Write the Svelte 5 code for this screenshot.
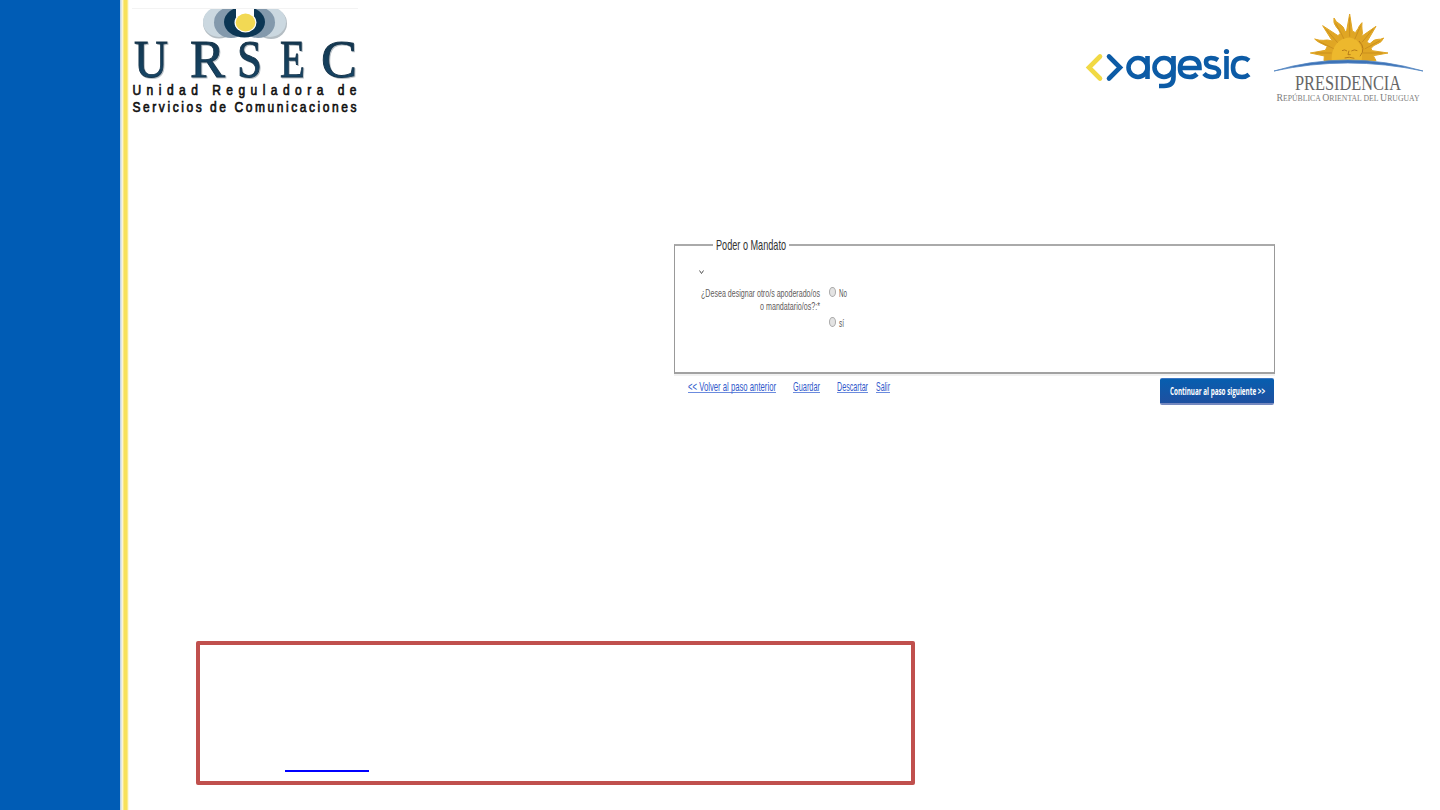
<script>
  const links = [
    { label: '<< Volver al paso anterior', width: 88, gap: 17 },
    { label: 'Guardar', width: 27, gap: 17 },
    { label: 'Descartar', width: 31, gap: 8 },
    { label: 'Salir', width: 14, gap: 0 }
  ];
  // condensed lettering: set small, then stretched vertically
  const k = 0.62;
</script>

{#snippet fit(text, width, height, baseline, size)}
  <svg class="fit" {width} {height}>
    <text x="0" y={baseline * k} font-size={size * k} transform="scale(1 {1 / k})" textLength={width} lengthAdjust="spacingAndGlyphs">{text}</text>
  </svg>
{/snippet}

<div class="page">
  <aside></aside>
  <div class="stripe"></div>
  <main>
    <header>
      <svg class="ursec" width="232" height="112" viewBox="129 4 232 112">
        <defs>
          <linearGradient id="navy" x1="0" y1="0" x2="0" y2="1">
            <stop offset="0" stop-color="#123349" />
            <stop offset="1" stop-color="#17496c" />
          </linearGradient>
          <clipPath id="crown"><rect x="200" y="9" width="90" height="32" /></clipPath>
        </defs>
        <path d="M132 8.5H358" stroke="#f3f3f3" />
        <g clip-path="url(#crown)">
          <ellipse cx="219" cy="23" rx="16" ry="15.5" fill="#b4bdc3" />
          <ellipse cx="271" cy="23.500" rx="16" ry="15.500" fill="#b4bdc3" />
          <ellipse cx="219" cy="22" rx="16" ry="15" fill="#cbd8e0" />
          <ellipse cx="270" cy="22" rx="16" ry="15" fill="#cbd8e0" />
          <ellipse cx="231" cy="22.500" rx="17" ry="15.500" fill="#8399ac" />
          <ellipse cx="258" cy="22.500" rx="17" ry="15.500" fill="#8399ac" />
          <ellipse cx="244.500" cy="22" rx="20.500" ry="15.500" fill="#0b3654" />
          <path d="M236 8h18v9h-18z" fill="#fff" />
          <ellipse cx="245.500" cy="22.500" rx="11" ry="10" fill="#fff" />
          <ellipse cx="245.500" cy="22.500" rx="9.800" ry="9" fill="#f2d954" />
        </g>
        <g class="initials" font-size="52" fill="url(#navy)">
          <text x="134" y="77" textLength="34" lengthAdjust="spacingAndGlyphs">U</text>
          <text x="190" y="77" textLength="35" lengthAdjust="spacingAndGlyphs">R</text>
          <text x="237" y="77" textLength="25" lengthAdjust="spacingAndGlyphs">S</text>
          <text x="280" y="77" textLength="25" lengthAdjust="spacingAndGlyphs">E</text>
          <text x="321" y="77" textLength="36" lengthAdjust="spacingAndGlyphs">C</text>
        </g>
        <g class="motto" font-size="15" transform="translate(132.500 0) scale(.8 1)">
          <text x="0" y="95" textLength="280">Unidad Reguladora de</text>
          <text x="0" y="112.500" textLength="280">Servicios de Comunicaciones</text>
        </g>
      </svg>

      <svg class="agesic" width="170" height="50" viewBox="1083 43 170 50" fill="none" stroke-width="4.600">
        <path d="M1100 56.500 1089 67.500 1100 78.500" stroke="#f1d944" stroke-linecap="round" />
        <path d="M1109 56.500 1120 67.500 1109 78.500" stroke="#0c5ba6" stroke-linecap="round" />
        <g stroke="#0c5ba6">
          <circle cx="1138" cy="67.500" r="9.500" />
          <path d="M1147.500 56V79" />
          <circle cx="1164" cy="67.500" r="9.500" />
          <path d="M1173.500 56V77Q1173.500 86 1164 86H1159" />
          <path d="M1180 68H1199.500Q1199.500 58 1190 58T1180 67.500 1190 77Q1194 77 1197 74" />
          <path d="M1218 60Q1215 58 1211 58Q1206 58 1206 62Q1206 66.500 1212 67.200Q1219 68 1219 72.500Q1219 77 1212.500 77Q1207 77 1204 73.500" />
          <path d="M1226.500 56V79" />
          <path d="M1249 60.500Q1246 58 1242 58Q1233 58 1233 67.500T1242 77Q1246 77 1249 74.500" />
        </g>
        <circle cx="1226.500" cy="51.500" r="2.600" fill="#0c5ba6" />
      </svg>

      <svg class="presidencia" width="156" height="100" viewBox="1270 8 156 100">
        <g transform="translate(1298 10) scale(.33333)">
          <path fill="#e0a624" stroke="#e0a624" stroke-width="3" stroke-linejoin="round" d="M78 152 79 138 37 129 82 121 88 109Q72 101 65 98Q57 94 50 87Q65 92 76 91Q88 88 103 93L74 47 120 77 127 70Q123 59 115 51Q105 40 108 24Q113 36 126 43Q138 49 141 65L146 62 155 12 163 63 172 68 180 56Q183 47 192 38Q191 49 192 57Q195 70 191 79L234 49 206 97 216 101Q229 87 240 88Q248 89 257 84Q250 98 239 101Q227 105 219 115L222 122 270 129 226 137 234 152Z" />
          <path d="M101 152C99 108 125 83 153 83S199 111 190 154Z" fill="#edb82d" />
          <path d="M155 22V80M84 58 119 98M226 56 192 97M113 40Q129 67 138 87M188 47 170 88M62 94 107 116M246 92 200 117M52 129H101M254 129H194" fill="none" stroke="#c68b1d" stroke-width="2.500" />
          <path d="M132 122Q140 117 147 123M160 123Q169 117 178 122M153 122 150 134H158M140 144Q153 139 169 145M183 93Q205 115 186 139" fill="none" stroke="#b77b19" stroke-width="3" />
        </g>
        <path d="M1288 69Q1347 58 1409 69V73H1288Z" fill="#fff" />
        <path d="M1274 71Q1347 49 1423 71Q1347 55 1274 71Z" fill="#3c72b8" stroke="#5487c2" stroke-width=".8" />
        <g class="caption">
          <text x="1295" y="90" font-size="20" fill="#666" textLength="106" lengthAdjust="spacingAndGlyphs">PRESIDENCIA</text>
          <text x="1276.500" y="101" fill="#7b7b7b" textLength="143" lengthAdjust="spacingAndGlyphs" font-size="7.500"><tspan font-size="9.500">R</tspan>EPÚBLICA <tspan font-size="9.500">O</tspan>RIENTAL DEL <tspan font-size="9.500">U</tspan>RUGUAY</text>
        </g>
      </svg>
    </header>

    <section class="form">
      <div class="box">
        <div class="legend">{@render fit('Poder o Mandato', 70, 16, 12.5, 14)}</div>
        <svg class="mark" width="5" height="8" viewBox="0 0 5 8"><path d="M.5 2.500 2.500 5.500 4.500 2.500" fill="none" stroke="#555" /></svg>
        <div class="question">
          <div class="label">
            {@render fit('¿Desea designar otro/s apoderado/os', 119, 13, 10, 11)}
            {@render fit('o mandatario/os?:*', 60, 13, 10, 11)}
          </div>
          <div class="options">
            <div class="option"><i></i>{@render fit('No', 8, 13, 10.5, 11)}</div>
            <div class="option"><i></i>{@render fit('sí', 5, 13, 10.5, 11)}</div>
          </div>
        </div>
      </div>
      <div class="actions">
        {#each links as link}
          <span class="link" style="margin-right: {link.gap}px">{@render fit(link.label, link.width, 14, 10.5, 12)}</span>
        {/each}
        <div class="button">{@render fit('Continuar al paso siguiente >>', 95, 14, 11, 10)}</div>
      </div>
    </section>

    <section class="note"><span></span></section>
  </main>
</div>

<style>
  :global(body) { margin: 0; background: #fff; }
  .page { display: flex; width: 1440px; height: 810px; overflow: hidden; background: #fff; }
  aside { width: 120px; background: #005cb5; }
  .stripe { width: 9px; background: linear-gradient(90deg, #c3d5e4 0 1px, #fbf9eb 2px, #fcf3b8 3px, #f7e15b 4px 7px, #fdf5bd 8px, #fff 9px); }
  main { flex: 1; display: flex; flex-direction: column; align-items: flex-start; }
  svg { display: block; overflow: visible; flex: none; }
  header { display: flex; align-items: flex-start; width: 100%; height: 120px; }
  .ursec { margin-top: 4px; }
  .agesic { margin: 43px 17px 0 auto; }
  .presidencia { margin: 8px 14px 0 0; }
  .initials { font-family: "Liberation Serif", serif; stroke: #15344b; stroke-width: .9px; filter: drop-shadow(1px 1px .5px #b9c1c7); }
  .motto { font-family: "Liberation Sans", sans-serif; fill: #111; stroke: #111; stroke-width: .7px; }
  .caption { font-family: "Liberation Serif", serif; }
  .form { width: 601px; margin: 124px 0 0 545px; color: #444; }
  .fit text { font-family: "Liberation Sans", sans-serif; fill: currentColor; }
  .box { box-sizing: border-box; height: 130px; border: 1px solid #999; border-top: 2px solid #aaa; border-bottom: 2px solid #a2a2a2; box-shadow: 0 2px #f1f1f1; }
  .legend { width: 70px; height: 16px; margin: -9px 0 0 38px; padding: 0 3px 0 3px; background: #fff; color: #333; }
  .mark { margin: 15px 0 0 24px; }
  .question { display: flex; margin: 11px 0 0 26px; }
  .label { display: flex; flex-direction: column; align-items: flex-end; width: 119px; color: #625b5b; }
  .options { margin-left: 9px; display: flex; flex-direction: column; gap: 17px; }
  .option { display: flex; align-items: flex-start; gap: 3px; height: 13px; color: #555; }
  .option i { box-sizing: border-box; width: 7px; height: 10px; border: 1px solid #aaa; border-radius: 50%; background: #e3e3e3; }
  .actions { display: flex; align-items: flex-start; padding: 6px 1px 0 14px; }
  .link { color: #3159cb; height: 12px; border-bottom: 1px solid #6b8bde; }
  .button { display: flex; justify-content: center; align-items: center; box-sizing: border-box; width: 114px; height: 27px; margin: -2px 0 0 auto; background: linear-gradient(#075eaf, #1e50a0); border-top: 1px solid #3c76c2; border-bottom: 2px solid #7589bf; border-radius: 2px; color: #fff; }
  .button :global(text) { font-family: "Open Sans", sans-serif; font-weight: 700; }
  .note { display: flex; align-items: flex-end; box-sizing: border-box; width: 719px; height: 144px; margin: auto 0 25px 67px; padding: 0 0 9px 85px; border: 4px solid #c0504d; border-radius: 2px; }
  .note span { width: 84px; height: 2px; background: #00f; }
</style>
